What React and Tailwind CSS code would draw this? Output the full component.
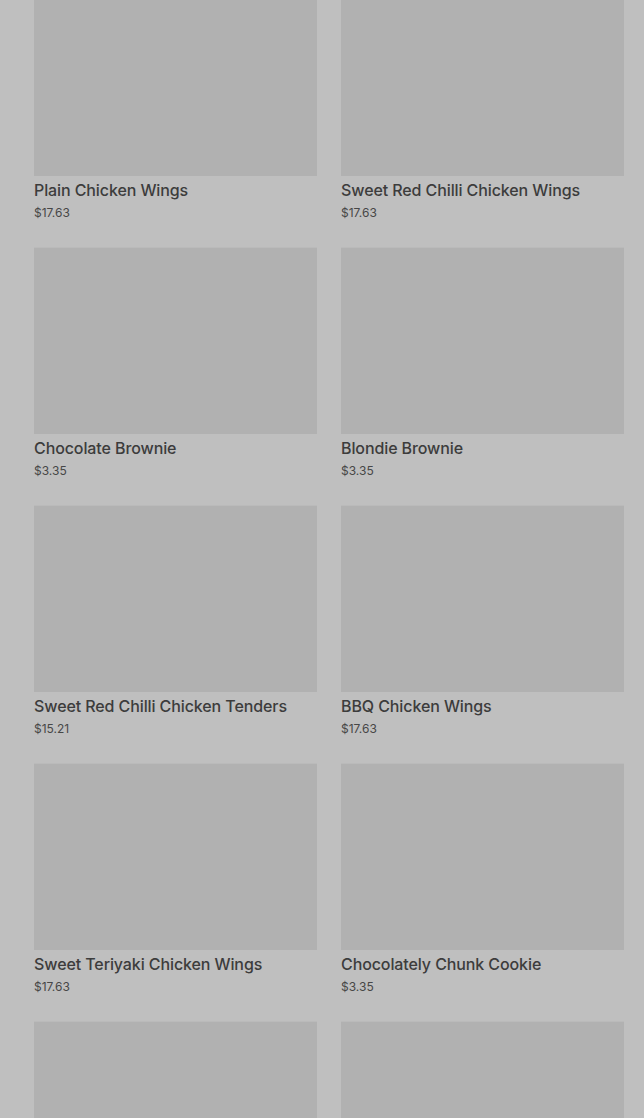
const ITEMS = [
  { name: "Plain Chicken Wings", price: "$17.63" },
  { name: "Sweet Red Chilli Chicken Wings", price: "$17.63" },
  { name: "Chocolate Brownie", price: "$3.35" },
  { name: "Blondie Brownie", price: "$3.35" },
  { name: "Sweet Red Chilli Chicken Tenders", price: "$15.21" },
  { name: "BBQ Chicken Wings", price: "$17.63" },
  { name: "Sweet Teriyaki Chicken Wings", price: "$17.63" },
  { name: "Chocolately Chunk Cookie", price: "$3.35" },
  { name: "Garlic Parmesan Chicken Wings", price: "$17.63" },
  { name: "Salted Caramel Cookie", price: "$3.35" },
];

export default function App() {
  return (
    <div className="min-h-[1118px] h-[1118px] overflow-hidden bg-[#bfbfbf] font-['Inter',sans-serif]">
      <div className="grid grid-cols-2 gap-x-6 gap-y-[26px] pl-[34px] pr-[20px] -mt-[11px]">
        {ITEMS.map((item) => (
          <div key={item.name} className="flex flex-col">
            <div className="h-[187px] bg-[#b1b1b1] border-t border-[#bababa]" />
            <h3 className="mt-1 text-[16px] leading-5 font-medium text-[#3c3c3c] tracking-[-0.1px]">
              {item.name}
            </h3>
            <p className="mt-[5px] text-[12px] leading-4 text-[#474747]">{item.price}</p>
          </div>
        ))}
      </div>
    </div>
  );
}
